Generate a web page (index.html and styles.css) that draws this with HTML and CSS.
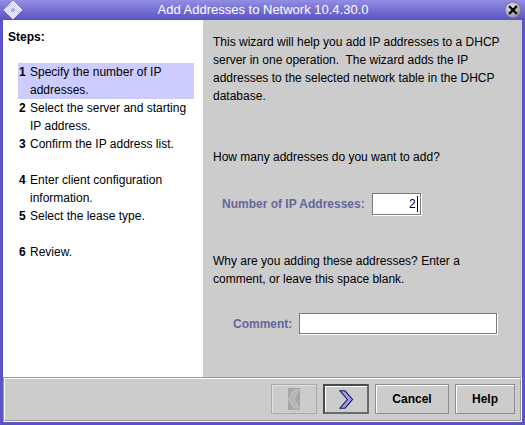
FILE: index.html
```html
<!DOCTYPE html>
<html>
<head>
<meta charset="utf-8">
<link rel="stylesheet" href="styles.css">
</head>
<body>
<div class="window">
  <div class="titlebar">
    <span class="ticon">
      <svg width="20" height="20" viewBox="0 0 20 20">
        <defs>
          <pattern id="chk" width="2" height="2" patternUnits="userSpaceOnUse">
            <rect width="2" height="2" fill="#c9c6ee"/>
            <rect width="1" height="1" fill="#ffffff"/>
            <rect x="1" y="1" width="1" height="1" fill="#ffffff"/>
          </pattern>
        </defs>
        <polygon points="10,1 19,10 10,19 1,10" fill="url(#chk)" stroke="#e8e6fa" stroke-width="1"/>
        <circle cx="10" cy="10" r="2" fill="#a9a5e4"/>
      </svg>
    </span>
    <span class="title">Add Addresses to Network 10.4.30.0</span>
    <span class="close">
      <svg width="20" height="20" viewBox="0 0 20 20">
        <defs>
          <radialGradient id="cg" cx="40%" cy="35%" r="65%">
            <stop offset="0" stop-color="#eeeef2"/>
            <stop offset="1" stop-color="#8e8ea0"/>
          </radialGradient>
        </defs>
        <circle cx="10" cy="10" r="8" fill="url(#cg)" stroke="#6e6c98" stroke-width="0.8"/>
        <path d="M7 7 L13 13 M13 7 L7 13" stroke="#000" stroke-width="2.4" stroke-linecap="square"/>
      </svg>
    </span>
  </div>
  <div class="body">
    <div class="steps">
      <div class="steps-title">Steps:</div>
      <div class="step current"><span class="num">1</span><span class="txt">Specify the number of IP addresses.</span></div>
      <div class="step"><span class="num">2</span><span class="txt">Select the server and starting IP address.</span></div>
      <div class="step spaced"><span class="num">3</span><span class="txt">Confirm the IP address list.</span></div>
      <div class="step"><span class="num">4</span><span class="txt">Enter client configuration information.</span></div>
      <div class="step spaced"><span class="num">5</span><span class="txt">Select the lease type.</span></div>
      <div class="step"><span class="num">6</span><span class="txt">Review.</span></div>
    </div>
    <div class="main">
      <p class="intro">This wizard will help you add IP addresses to a DHCP server in one operation.&nbsp; The wizard adds the IP addresses to the selected network table in the DHCP database.</p>
      <p class="question">How many addresses do you want to add?</p>
      <div class="field number-field">
        <span class="label">Number of IP Addresses:</span>
        <div class="textfield short">2<span class="caret"></span></div>
      </div>
      <p class="why">Why are you adding these addresses? Enter a comment, or leave this space blank.</p>
      <div class="field comment-field">
        <span class="label">Comment:</span>
        <div class="textfield long"></div>
      </div>
    </div>
  </div>
  <div class="buttonbar">
    <div class="buttonbar-inner">
      <div class="btn disabled">
        <svg width="12" height="22" viewBox="0 0 12 22">
          <rect x="0" y="0" width="12" height="22" fill="#a6a6a6"/>
          <polygon points="11,2 6,2 0.8,11 6,20 11,20 5.8,11" fill="#b4b4b4" stroke="#c8c8c8" stroke-width="1"/>
        </svg>
      </div>
      <div class="btn focused">
        <svg width="15" height="19" viewBox="0 0 15 19">
          <polygon points="1,0.8 6,0.8 13.5,9.5 6,18.2 1,18.2 8.4,9.5" fill="#9c9cff" stroke="#1c1c3c" stroke-width="1.1" stroke-linejoin="miter"/>
        </svg>
      </div>
      <div class="btn cancel">Cancel</div>
      <div class="btn help">Help</div>
    </div>
  </div>
</div>
</body>
</html>
```

FILE: styles.css
```css
* {
  box-sizing: border-box;
  margin: 0;
  padding: 0;
}

body {
  margin: 0;
  width: 525px;
  height: 425px;
  overflow: hidden;
  font-family: "Liberation Sans", Arial, sans-serif;
  font-size: 12px;
  color: #000;
}

.window {
  width: 525px;
  height: 425px;
  background: #5c54c5;
  display: flex;
  flex-direction: column;
  padding: 0 3px 3px 3px;
}

.titlebar {
  height: 20px;
  margin: 0 -3px;
  padding: 0 3px;
  background: linear-gradient(#928ee3, #5a52c4);
  display: flex;
  align-items: center;
}

.ticon,
.close {
  width: 20px;
  height: 20px;
  display: flex;
  flex: none;
}

.close {
  margin-right: -1px;
}

.title {
  flex: 1;
  text-align: center;
  color: #fff;
  font-size: 13px;
  line-height: 18px;
  padding-bottom: 1px;
}

.body {
  flex: 1;
  display: flex;
  min-height: 0;
}

.steps {
  width: 200px;
  flex: none;
  background: #fff;
  padding: 8px 0 0 5px;
  line-height: 18px;
}

.steps-title {
  font-weight: bold;
  margin-bottom: 17px;
}

.step {
  display: grid;
  grid-template-columns: 12px 164px;
  margin-left: 10px;
  width: 176px;
}

.step .num {
  font-weight: bold;
  padding-left: 1px;
}

.step.current {
  background: #ccccff;
}

.step.spaced {
  margin-bottom: 18px;
}

.main {
  flex: 1;
  background: #cccccc;
  padding: 13px 10px 0 10px;
  line-height: 18px;
}

.intro {
  width: 297px;
}

.question {
  margin-top: 43px;
}

.field {
  display: flex;
  align-items: center;
}

.label {
  font-weight: bold;
  color: #666699;
}

.number-field {
  margin-top: 27px;
  padding-left: 9px;
}

.number-field .label {
  margin-right: 7px;
}

.textfield {
  background: #fff;
  border: 1px solid #7a7a7a;
  box-shadow: 1px 1px 0 #fff;
  line-height: 18px;
}

.textfield.short {
  width: 49px;
  height: 22px;
  text-align: right;
  padding-right: 2px;
  display: flex;
  justify-content: flex-end;
  align-items: center;
}

.caret {
  display: inline-block;
  width: 1px;
  height: 16px;
  background: #000;
  margin-left: 1px;
}

.why {
  margin-top: 37px;
  width: 297px;
}

.comment-field {
  margin-top: 25px;
  padding-left: 20px;
}

.comment-field .label {
  margin-right: 7px;
}

.textfield.long {
  width: 198px;
  height: 21px;
}

.buttonbar {
  height: 45px;
  flex: none;
  border: 1px solid;
  border-color: #999999 #ffffff #ffffff #999999;
  background: #cccccc;
}

.buttonbar-inner {
  height: 100%;
  border: 1px solid;
  border-color: #ffffff #999999 #999999 #ffffff;
  display: flex;
  justify-content: flex-end;
  align-items: flex-start;
  gap: 6px;
  padding: 5px 5px 0 0;
}

.btn {
  height: 30px;
  border: 1px solid #8e8e8e;
  box-shadow: inset 1px 1px 0 #fff;
  background: #cccccc;
  display: flex;
  align-items: center;
  justify-content: center;
  font-weight: bold;
  font-size: 12px;
}

.btn.disabled,
.btn.focused {
  width: 46px;
}

.btn.disabled {
  border-color: #a9a9a9;
  box-shadow: inset 1px 1px 0 #e2e2e2;
}

.btn.focused {
  border: 2px solid;
  border-color: #4a4a4a #6a6a6a #6a6a6a #4a4a4a;
  box-shadow: inset 1px 1px 0 #fff;
}

.btn.cancel {
  width: 74px;
}

.btn.help {
  width: 60px;
}
```
